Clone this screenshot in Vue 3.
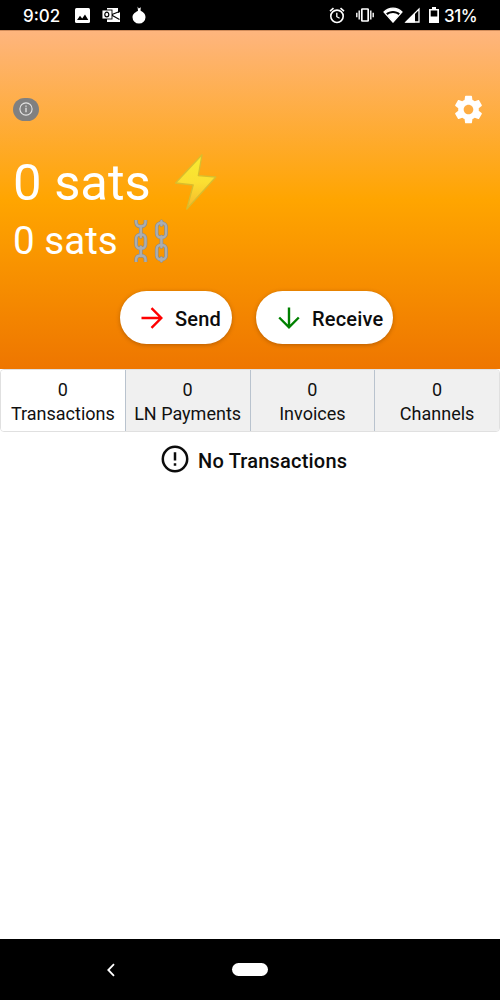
<script setup>
const tabs = ['Transactions', 'LN Payments', 'Invoices', 'Channels']
</script>

<template>
  <div class="phone">
    <div class="status">
      <span class="clock">9:02</span>
      <svg class="i-img" width="15" height="15" viewBox="0 0 15 15"><rect width="15" height="15" rx="1.5" fill="#fff" /><path d="M2 12l3-4.3 2.2 2.7L10 6.5l3.3 5.5z" fill="#000" /></svg>
      <svg class="i-mail" width="18" height="14" viewBox="0 0 18 14">
        <path d="M5 0H16V5L18 4V14H5z" fill="#fff" />
        <path d="M10 6.5L17.5 3.5M9.5 7L17.5 11.5" stroke="#000" stroke-width="1.2" />
        <rect x="0" y="2" width="10" height="9" fill="#fff" stroke="#000" stroke-width=".9" />
        <ellipse cx="4.8" cy="6.5" rx="2" ry="2.3" fill="none" stroke="#000" stroke-width="1.2" />
      </svg>
      <svg class="i-onion" width="14" height="18" viewBox="0 0 14 18"><path d="M5.5 .5L6.8 2.5 8.8 1.2 8.5 4.6C10 6 13.5 7 13.5 11.2A6.5 6.3 0 0 1 7 17.5 6.5 6.3 0 0 1 .5 11.2C.5 7.5 4 6 6 4.7z" fill="#fff" /></svg>
      <svg class="i-alarm" width="16" height="17" viewBox="0 0 16 17" fill="none" stroke="#fff" stroke-width="1.6"><circle cx="8" cy="9.3" r="6.2" /><path d="M1 4.1L4.5 1.1M15 4.1L11.5 1.1" /><path d="M7.8 5.7V9.7L10.6 11.3" stroke-width="1.3" /></svg>
      <svg class="i-vibe" width="18" height="14" viewBox="0 0 18 14" fill="none" stroke="#fff"><rect x="5.8" y="1" width="6.4" height="12" rx=".6" stroke-width="1.7" /><path d="M3.2 2.5V11.5M14.8 2.5V11.5M.8 4.7V9.3M17.2 4.7V9.3" stroke-width="1.4" /></svg>
      <svg class="i-wifi" width="20" height="16" viewBox="0 0 20 16"><path d="M1 5C6-.1 14-.1 19 5L10 15.2z" stroke="#fff" fill="none" stroke-width="1.2" /><path d="M1 5C6-.1 14-.1 19 5L17.4 6.8C12.8 3 7.2 3 2.6 6.8z" fill="#fff" /><path d="M4.2 8.3C7.6 5.3 12.4 5.3 15.8 8.3L10 15z" fill="#fff" /></svg>
      <svg class="i-cell" width="16" height="16" viewBox="0 0 16 16"><path d="M15 2V15H2z" fill="none" stroke="#fff" stroke-width="1.3" /><path d="M1 15.5L11 5.5V15.5z" fill="#fff" /></svg>
      <svg class="i-batt" width="10" height="16" viewBox="0 0 10 16"><path d="M3 0H7V2H10V16H0V2H3z" fill="#fff" /><rect x="1.7" y="3.5" width="6.6" height="6" fill="#000" /></svg>
      <span class="percent">31%</span>
    </div>

    <header class="wallet">
      <div class="tools">
        <div class="info"><svg width="14" height="14" viewBox="0 0 14 14" fill="none" stroke="#e4e4e4"><circle cx="7" cy="7" r="6.1" stroke-width="1.1" /><path d="M7 5.8V10.3M7 3.4V4.8" stroke-width="1.3" /></svg></div>
        <svg class="gear" width="33" height="33" viewBox="0 0 24 24" fill="#fff"><path d="M19.43 12.98c.04-.32.07-.64.07-.98s-.03-.66-.07-.98l2.11-1.65c.19-.15.24-.42.12-.64l-2-3.46c-.12-.22-.39-.3-.61-.22l-2.49 1c-.52-.4-1.08-.73-1.69-.98l-.38-2.65C14.46 2.18 14.25 2 14 2h-4c-.25 0-.46.18-.49.42l-.38 2.65c-.61.25-1.17.59-1.69.98l-2.49-1c-.23-.09-.49 0-.61.22l-2 3.46c-.13.22-.07.49.12.64l2.11 1.65c-.04.32-.07.65-.07.98s.03.66.07.98l-2.11 1.65c-.19.15-.24.42-.12.64l2 3.46c.12.22.39.3.61.22l2.49-1c.52.4 1.08.73 1.69.98l.38 2.65c.03.24.24.42.49.42h4c.25 0 .46-.18.49-.42l.38-2.65c.61-.25 1.17-.59 1.69-.98l2.49 1c.23.09.49 0 .61-.22l2-3.46c.12-.22.07-.49-.12-.64l-2.11-1.65zM12 15.5c-1.93 0-3.5-1.57-3.5-3.5s1.57-3.5 3.5-3.5 3.5 1.57 3.5 3.5-1.57 3.5-3.5 3.5z" /></svg>
      </div>
      <div class="balance big">
        <span>0 sats</span>
        <svg class="bolt" width="44" height="58" viewBox="0 0 44 58">
          <defs><linearGradient id="bolt" x1="0" y1="0" x2="0" y2="1"><stop offset="0" stop-color="#f8ec31" /><stop offset=".5" stop-color="#fbdf32" /><stop offset="1" stop-color="#f6b72b" /></linearGradient></defs>
          <path d="M28 1.8L1.6 30 19.2 32 12.8 56 41.8 24 24.3 22.6z" fill="url(#bolt)" stroke="#d9bd2d" stroke-width="1.3" stroke-linejoin="round" />
        </svg>
      </div>
      <div class="balance small">
        <span>0 sats</span>
        <svg class="chains" width="36" height="44" viewBox="0 0 36 44" fill="none">
          <g v-for="s in [['#858b90', 3.6], ['#abadb0', 2.4]]" :key="s[0]" :stroke="s[0]" :stroke-width="s[1]">
            <path d="M3.1 1V3Q3.1 7.5 7.8 7.5T12.5 3V1" />
            <rect x="3.1" y="15.5" width="9.4" height="14" rx="4" />
            <path d="M3.1 43V40.5Q3.1 36.5 7.8 36.5T12.5 40.5V43" />
            <rect x="23.7" y="4" width="9.4" height="14.5" rx="4" />
            <rect x="23.7" y="26" width="9.4" height="14.5" rx="4" />
            <path d="M7.8 7.5V18M7.8 28V37M28.4 17.5V28M28.4 2.2V6M28.4 39V42" stroke-linecap="round" />
          </g>
        </svg>
      </div>
      <div class="actions">
        <button class="send"><svg width="22" height="22" viewBox="0 0 22 22" fill="none" stroke="#f00" stroke-width="2.4"><path d="M.5 11H20M10.5 1.2L20.3 11 10.5 20.8" /></svg><span>Send</span></button>
        <button class="receive"><svg width="22" height="22" viewBox="0 0 22 22" fill="none" stroke="#008000" stroke-width="2.4"><path d="M11 .5V20M1.2 10.5L11 20.3 20.8 10.5" /></svg><span>Receive</span></button>
      </div>
    </header>

    <nav class="tabs">
      <div v-for="(t, i) in tabs" :key="t" class="tab" :class="{ active: i === 0 }"><span>0</span><span>{{ t }}</span></div>
    </nav>
    <main class="empty">
      <svg width="28" height="28" viewBox="0 0 28 28" fill="none" stroke="#0c0c0c" stroke-width="2.5"><circle cx="14" cy="14" r="12.2" /><path d="M14 7.2V15.5M14 18.2V20.8" /></svg>
      <span>No Transactions</span>
    </main>
    <footer class="navbar">
      <svg width="8" height="14" viewBox="0 0 8 14" fill="none" stroke="#fff" stroke-width="1.8"><path d="M7 1.2L1.3 7 7 12.8" /></svg>
      <div class="pill"></div>
    </footer>
  </div>
</template>

<style>
body { margin: 0; background: #fff; }
</style>

<style scoped>
.phone { width: 500px; height: 1000px; display: flex; flex-direction: column; font-family: Roboto, sans-serif; color: #111; background: #fff; overflow: hidden; }
svg { display: block; flex: none; }
span { white-space: nowrap; }
.status { height: 30px; flex: none; display: flex; align-items: center; background: #000; color: #fff; font: 500 17px/32px Inter, sans-serif; border-bottom: 1px solid #d08b59; box-sizing: content-box; }
.clock { width: 52px; margin-left: 23px; padding-top: 1px; }
.i-mail { margin-left: 12px; }
.i-onion { margin-left: 12px; }
.i-alarm { margin-left: 183px; }
.i-vibe { margin-left: 11px; }
.i-wifi { margin-left: 9px; }
.i-cell { margin-left: 1px; }
.i-batt { margin-left: 9px; }
.percent { margin-left: 5px; padding-top: 1px; letter-spacing: -.5px; }
.wallet { height: 338px; flex: none; box-sizing: border-box; background: linear-gradient(#feb57e, #ffa500 50%, #ee7600); color: #fff; padding-top: 61px; }
.tools { height: 34px; display: flex; justify-content: space-between; align-items: center; padding: 0 15px 0 13px; }
.info { width: 26px; height: 23px; border-radius: 12px; background: #808080; display: flex; align-items: center; justify-content: center; }
.balance { display: flex; align-items: center; padding-left: 13px; }
.big { height: 60px; margin-top: 26px; font-size: 50.8px; line-height: 60px; }
.big span { width: 161px; padding-top: 2px; }
.small { height: 48px; margin-top: 4px; font-size: 38.6px; line-height: 48px; }
.small span { width: 120px; padding-top: 2px; }
.chains { margin-top: 2px; }
.actions { display: flex; gap: 24px; margin: 27px 0 0 120px; }
button { height: 53px; border: 0; border-radius: 27px; padding: 0 0 0 21px; background: #fff; display: flex; align-items: center; gap: 12px; font: 500 20px/24px Roboto, sans-serif; color: #0c0c0c; box-shadow: 0 1px 4px rgba(80, 40, 0, .35); letter-spacing: .2px; }
button span { padding-top: 3px; }
.send { width: 112px; }
.receive { width: 137px; padding-left: 22px; }
.tabs { height: 63px; flex: none; box-sizing: border-box; display: flex; border: 1px solid #e0e0e0; border-radius: 4px; overflow: hidden; }
.tab { flex: 1; box-sizing: border-box; display: flex; flex-direction: column; align-items: center; padding-top: 8px; background: #f0f0f0; font-size: 18px; line-height: 24px; border-left: 1px solid #b9c3ce; }
.tab.active { background: #fff; border-left: 0; }
.empty { flex: 1; display: flex; align-items: flex-start; padding: 13px 0 0 161px; gap: 9px; font-weight: 500; font-size: 20px; line-height: 31px; letter-spacing: .2px; color: #0c0c0c; }
.empty span { padding-top: 1px; }
.navbar { height: 61px; flex: none; background: #000; display: flex; align-items: center; padding-left: 107px; }
.pill { width: 36px; height: 13px; border-radius: 7px; background: #fff; margin-left: 117px; }
</style>
